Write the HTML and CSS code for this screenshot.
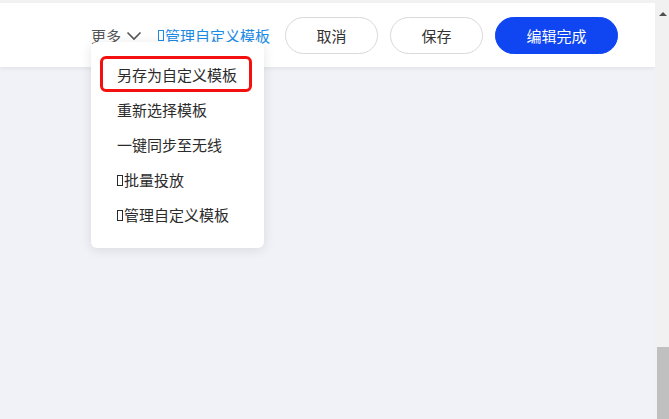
FILE: index.html
```html
<!DOCTYPE html>
<html lang="zh">
<head>
<meta charset="utf-8">
<link rel="stylesheet" href="styles.css">
</head>
<body>
<div class="page">
  <div class="main">
    <div class="topstrip"></div>
    <div class="header">
      <div class="more">更多<svg class="chev" width="16" height="10" viewBox="0 0 16 10"><path d="M1.5 1.5 L8 8 L14.5 1.5" fill="none" stroke="#555" stroke-width="1.6"/></svg></div>
      <div class="link"><span class="tofu"></span>管理自定义模板</div>
      <button class="btn">取消</button>
      <button class="btn">保存</button>
      <button class="btn primary">编辑完成</button>
    </div>
    <div class="dropdown">
      <div class="item">另存为自定义模板</div>
      <div class="item">重新选择模板</div>
      <div class="item">一键同步至无线</div>
      <div class="item"><span class="tofu"></span>批量投放</div>
      <div class="item"><span class="tofu"></span>管理自定义模板</div>
      <div class="mark"></div>
    </div>
  </div>
  <div class="scrollbar">
    <div class="arrow"></div>
    <div class="thumb"></div>
  </div>
</div>
</body>
</html>
```
FILE: styles.css
```css
* { box-sizing: border-box; }
html, body { margin: 0; padding: 0; }
body {
  width: 669px;
  height: 419px;
  overflow: hidden;
  font-family: "Noto Sans CJK SC", "Noto Sans", sans-serif;
  font-size: 15px;
}
.page {
  display: flex;
  width: 669px;
  height: 419px;
}
.main {
  position: relative;
  flex: 1;
  background: #f1f2f7;
  display: flex;
  flex-direction: column;
}
.topstrip {
  height: 3px;
  background: #f2f2f2;
}
.header {
  height: 64px;
  background: #fff;
  box-shadow: 0 2px 4px rgba(0,0,0,0.06);
  display: flex;
  align-items: center;
  justify-content: flex-end;
  padding-right: 37px;
}
.more {
  display: flex;
  align-items: center;
  color: #555;
  margin-right: 16px;
}
.chev { margin-left: 5px; margin-top: 2px; }
.link {
  color: #1b8be6;
  display: flex;
  align-items: center;
  margin-right: 15px;
}
.tofu {
  display: inline-block;
  width: 6px;
  height: 11px;
  border: 1px solid currentColor;
  margin-right: 1px;
  margin-top: 1px;
}
.btn {
  height: 37px;
  width: 93px;
  border-radius: 19px;
  border: 1px solid #d9d9d9;
  background: #fff;
  color: #333;
  font-family: inherit;
  font-size: 15px;
  margin-left: 12px;
  padding: 0;
}
.header .link + .btn { margin-left: 0; }
.btn.primary {
  width: 123px;
  background: #0f46f2;
  border-color: #0f46f2;
  color: #fff;
}
.dropdown {
  position: absolute;
  left: 91px;
  top: 42px;
  width: 173px;
  padding: 15px 0 16px;
  background: #fff;
  border-radius: 6px;
  box-shadow: 0 2px 12px rgba(0,0,0,0.1);
}
.item {
  height: 35px;
  display: flex;
  align-items: center;
  padding-left: 26px;
  color: #2b2b2b;
}
.mark {
  position: absolute;
  left: 9px;
  top: 14px;
  width: 152px;
  height: 36px;
  border: 3px solid #f51010;
  border-radius: 6px;
}
.scrollbar {
  width: 14px;
  background: #f1f1f1;
  position: relative;
  display: flex;
  flex-direction: column;
  justify-content: space-between;
}
.arrow {
  margin: 12px 0 0 4px;
  width: 0;
  height: 0;
  border-left: 4px solid transparent;
  border-right: 4px solid transparent;
  border-bottom: 4px solid #505050;
}
.thumb {
  margin-left: 2px;
  width: 12px;
  height: 72px;
  background: #c0c0c0;
}
```
